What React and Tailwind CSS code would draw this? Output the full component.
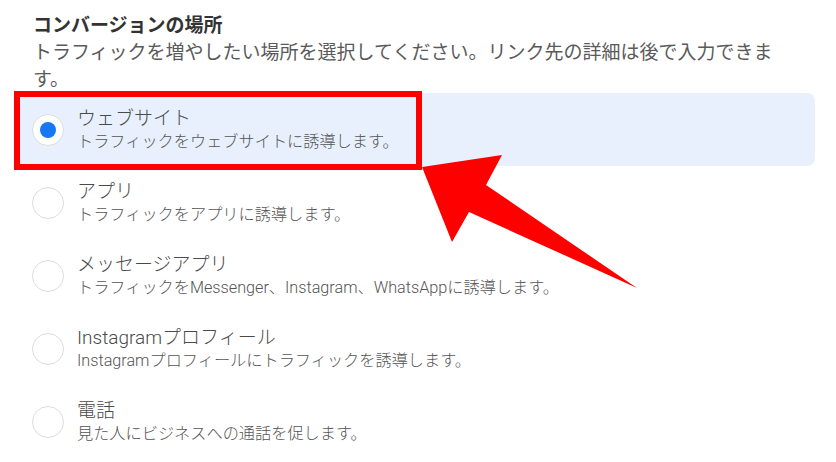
const options = [
  { title: "ウェブサイト", desc: "トラフィックをウェブサイトに誘導します。", selected: true },
  { title: "アプリ", desc: "トラフィックをアプリに誘導します。" },
  { title: "メッセージアプリ", desc: "トラフィックをMessenger、Instagram、WhatsAppに誘導します。" },
  { title: "Instagramプロフィール", desc: "Instagramプロフィールにトラフィックを誘導します。" },
  { title: "電話", desc: "見た人にビジネスへの通話を促します。" },
];

function Radio({ checked }) {
  return (
    <div className="flex h-8 w-8 shrink-0 items-center justify-center rounded-full border border-[#dadde1] bg-white">
      {checked && <div className="h-4 w-4 rounded-full bg-[#1877f2]" />}
    </div>
  );
}

export default function App() {
  return (
    <div
      className="relative h-[462px] w-[836px] overflow-hidden bg-white"
      style={{ fontFamily: 'Roboto, "Noto Sans CJK JP", sans-serif' }}
    >
      <div className="pl-[33px] pt-[12px]">
        <div className="text-[19px] font-bold leading-[27px] text-[#333]">コンバージョンの場所</div>
        <p className="w-[756px] text-[19px] leading-[27px] text-[#5a5a5a]">
          トラフィックを増やしたい場所を選択してください。リンク先の詳細は後で入力できます。
        </p>
      </div>

      <div className="ml-[14px] w-[801px]">
        {options.map((o) => (
          <div
            key={o.title}
            className={`flex h-[73px] items-center gap-[13px] rounded-lg pl-[18px] ${o.selected ? "bg-[#e7f0fc]" : ""}`}
          >
            <Radio checked={o.selected} />
            <div className="flex flex-col">
              <span className="text-[19px] font-light leading-[24px] text-[#4a4a4a]">{o.title}</span>
              <span className="text-[16.2px] font-light leading-[22px] text-[#555]">{o.desc}</span>
            </div>
          </div>
        ))}
      </div>

      {/* annotation overlay */}
      <div className="absolute left-[14px] top-[91px] h-[79px] w-[408px] border-[6px] border-[#ff0000]" />
      <svg className="absolute left-0 top-0" width="836" height="462" viewBox="0 0 836 462">
        <polygon
          points="422,167 502,155 486,185 637,288 469,212 452,242"
          fill="#ff0000"
        />
      </svg>
    </div>
  );
}
